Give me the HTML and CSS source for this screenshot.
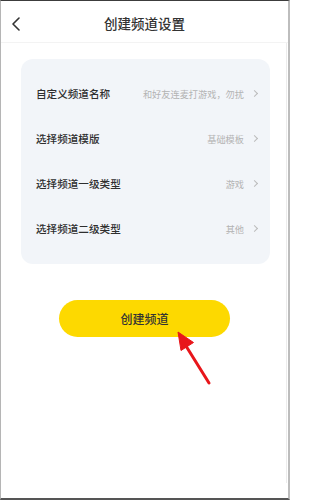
FILE: index.html
```html
<!DOCTYPE html>
<html lang="zh">
<head>
<meta charset="utf-8">
<link rel="stylesheet" href="styles.css">
</head>
<body>
<div class="frame">
  <header class="topbar">
    <span class="back"><svg width="10" height="14" viewBox="0 0 10 14"><path d="M8 1 L2 7 L8 13" fill="none" stroke="#333" stroke-width="1.6" stroke-linecap="round" stroke-linejoin="round"/></svg></span>
    <h1 class="title">创建频道设置</h1>
  </header>
  <main class="content">
    <section class="card">
      <div class="row"><span class="label">自定义频道名称</span><span class="value">和好友连麦打游戏，勿扰<i class="chev"></i></span></div>
      <div class="row"><span class="label">选择频道模版</span><span class="value">基础模板<i class="chev"></i></span></div>
      <div class="row"><span class="label">选择频道一级类型</span><span class="value">游戏<i class="chev"></i></span></div>
      <div class="row"><span class="label">选择频道二级类型</span><span class="value">其他<i class="chev"></i></span></div>
    </section>
    <div class="btnwrap"><button class="create">创建频道</button></div>
  </main>
  <div class="scrolltrack"></div>
</div>
<svg class="arrow" width="290" height="500" viewBox="0 0 290 500">
  <line x1="186" y1="346" x2="209" y2="383" stroke="#e8161b" stroke-width="3" stroke-linecap="round"/>
  <polygon points="178,332 193.5,342.5 181,350.5" fill="#e8161b" stroke="#e8161b" stroke-width="1" stroke-linejoin="round"/>
</svg>
</body>
</html>
```
FILE: styles.css
```css
html, body {
  margin: 0;
  padding: 0;
  background: #fff;
}
body {
  position: relative;
  width: 290px;
  height: 500px;
  font-family: "Noto Sans CJK SC", "Noto Sans", sans-serif;
  color: #333;
  overflow: hidden;
}
.frame {
  position: relative;
  box-sizing: border-box;
  width: 290px;
  height: 500px;
  border-top: 1px solid #3c3c3c;
  border-left: 1px solid #b5b5b5;
  border-right: 2px solid #bdbdbd;
  border-bottom: 2px solid #555;
  background: #fff;
}
.topbar {
  position: relative;
  height: 41px;
  border-bottom: 1px solid #f3f3f3;
  display: flex;
  align-items: center;
  justify-content: center;
}
.back {
  position: absolute;
  left: 10px;
  top: 16px;
  display: flex;
}
.title {
  margin: 0;
  font-size: 13.5px;
  font-weight: 500;
  color: #333;
  line-height: 1;
  padding-top: 4px;
}
.content {
  padding: 16px 18px 0 20px;
}
.card {
  background: #f2f5f9;
  border-radius: 12px;
  padding: 12px 0 13px;
}
.row {
  height: 45px;
  display: flex;
  align-items: center;
  justify-content: space-between;
  padding: 0 12px 0 15px;
}
.label {
  font-size: 10.6px;
  font-weight: 500;
  color: #2e2e2e;
}
.value {
  font-size: 9.2px;
  color: #b3b3b3;
  display: flex;
  align-items: center;
}
.chev {
  display: inline-block;
  width: 4px;
  height: 4px;
  border-top: 1px solid #bbb;
  border-right: 1px solid #bbb;
  transform: rotate(45deg);
  margin-left: 8px;
  margin-right: 1px;
}
.btnwrap {
  display: flex;
  justify-content: center;
  padding-top: 36px;
  padding-right: 2px;
}
.create {
  width: 171px;
  height: 37px;
  border: none;
  border-radius: 19px;
  background: #fdd900;
  color: #333;
  font-family: "Noto Sans CJK SC", "Noto Sans", sans-serif;
  font-size: 12px;
  font-weight: 500;
  padding: 0;
}
.scrolltrack {
  position: absolute;
  right: 1px;
  top: 42px;
  width: 1px;
  height: 440px;
  background: #ececec;
}
.arrow {
  position: absolute;
  left: 0;
  top: 0;
  pointer-events: none;
}
```
